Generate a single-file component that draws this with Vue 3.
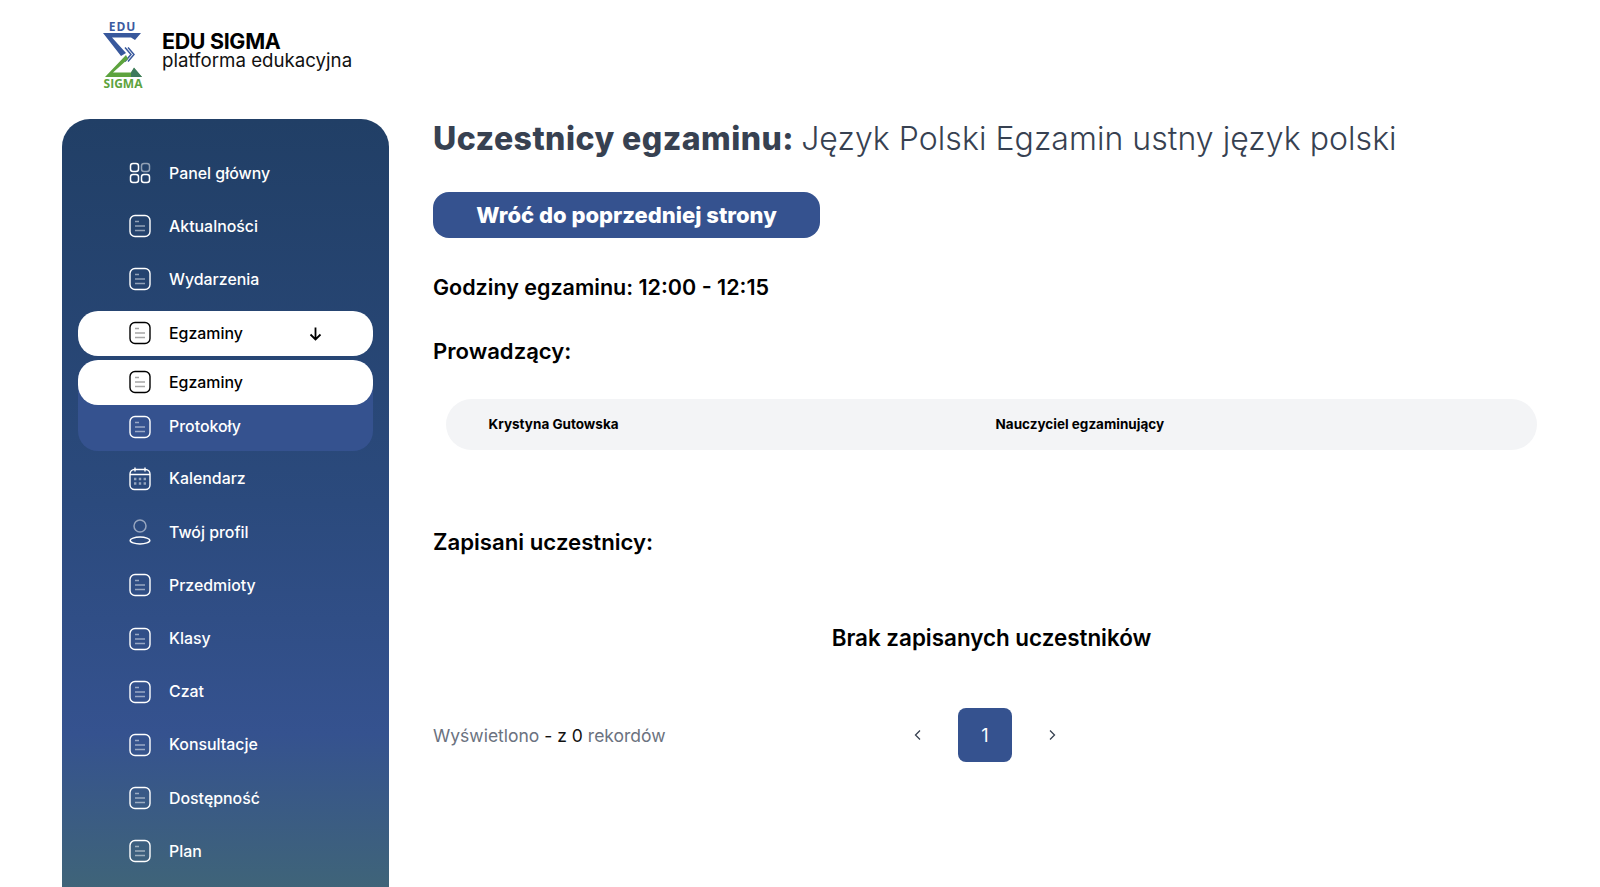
<script setup>
const before = [
  { label: 'Panel główny', icon: 'grid' },
  { label: 'Aktualności', icon: 'doc' },
  { label: 'Wydarzenia', icon: 'doc' }
]
const after = [
  { label: 'Kalendarz', icon: 'cal' },
  { label: 'Twój profil', icon: 'user' },
  { label: 'Przedmioty', icon: 'doc' },
  { label: 'Klasy', icon: 'doc' },
  { label: 'Czat', icon: 'doc' },
  { label: 'Konsultacje', icon: 'doc' },
  { label: 'Dostępność', icon: 'doc' },
  { label: 'Plan', icon: 'doc' }
]
</script>

<template>
  <div class="page">
    <header class="brand">
      <svg class="logo" width="60" height="80" viewBox="0 0 60 80">
        <text x="27.500" y="16" text-anchor="middle" class="lt edu" fill="#3c5a9f">EDU</text>
        <path d="M8 18H46L40 25 36 22.500H17L31 38 26 41Z" fill="#38589c"/>
        <path d="M30 32.500L36 39.500 30 46.500M33 32.500L39 39.500 33 46.500" fill="none" stroke="#38589c" stroke-width="1.500"/>
        <path d="M31 40L33 44 18 57.500H36L39 53 47 62H10Z" fill="#5da33e"/>
        <path d="M39 52.500L47 62H36L36 57.500Z" fill="#3d7a5c"/>
        <text x="28" y="73" text-anchor="middle" class="lt" fill="#5da33e">SIGMA</text>
      </svg>
      <div class="brand-text">
        <div class="brand-name">EDU SIGMA</div>
        <div class="brand-sub">platforma edukacyjna</div>
      </div>
    </header>

    <div class="layout">
      <aside class="sidebar">
        <nav class="nav">
          <a v-for="i in before" :key="i.label" class="row">
            <span class="ic">
              <svg v-if="i.icon === 'grid'" width="22" height="22" viewBox="0 0 22 22" fill="none" stroke="currentColor" stroke-width="1.500">
                <rect x="1.500" y="1.500" width="8" height="8" rx="2.500"/>
                <rect x="12.500" y="1.500" width="8" height="8" rx="2.500" opacity=".5"/>
                <rect x="1.500" y="12.500" width="8" height="8" rx="2.500"/>
                <rect x="12.500" y="12.500" width="8" height="8" rx="2.500"/>
              </svg>
              <svg v-else width="22" height="24" viewBox="0 0 22 24" fill="none" stroke="currentColor">
                <rect x="1" y="1.500" width="20" height="21" rx="5" stroke-width="1.400"/>
                <path d="M6 7.500h4M6 12h10M6 16.500h10" stroke-width="1.300" opacity=".5"/>
              </svg>
            </span>
            <span>{{ i.label }}</span>
          </a>

          <a class="row white first">
            <span class="ic">
              <svg width="22" height="24" viewBox="0 0 22 24" fill="none" stroke="currentColor">
                <rect x="1" y="1.500" width="20" height="21" rx="5" stroke-width="1.400"/>
                <path d="M6 7.500h4M6 12h10M6 16.500h10" stroke-width="1.300" opacity=".35"/>
              </svg>
            </span>
            <span class="grow">Egzaminy</span>
            <svg class="arrow" width="15" height="15" viewBox="0 0 15 15" fill="none" stroke="#000" stroke-width="1.800">
              <path d="M7.500 1.500V13.500M2.500 8.500L7.500 13.500 12.500 8.500"/>
            </svg>
          </a>

          <div class="group">
            <a class="row white sub">
              <span class="ic">
                <svg width="22" height="24" viewBox="0 0 22 24" fill="none" stroke="currentColor">
                  <rect x="1" y="1.500" width="20" height="21" rx="5" stroke-width="1.400"/>
                  <path d="M6 7.500h4M6 12h10M6 16.500h10" stroke-width="1.300" opacity=".35"/>
                </svg>
              </span>
              <span>Egzaminy</span>
            </a>
            <a class="row sub2">
              <span class="ic">
                <svg width="22" height="24" viewBox="0 0 22 24" fill="none" stroke="currentColor">
                  <rect x="1" y="1.500" width="20" height="21" rx="5" stroke-width="1.400"/>
                  <path d="M6 7.500h4M6 12h10M6 16.500h10" stroke-width="1.300" opacity=".5"/>
                </svg>
              </span>
              <span>Protokoły</span>
            </a>
          </div>

          <a v-for="i in after" :key="i.label" class="row">
            <span class="ic">
              <svg v-if="i.icon === 'cal'" width="22" height="24" viewBox="0 0 22 24" fill="none" stroke="currentColor">
                <rect x="1" y="2.500" width="20" height="20" rx="4.500" stroke-width="1.400"/>
                <path d="M1 7.500h20M6 .5v4M16 .5v4" stroke-width="1.400"/>
                <path d="M5 12h2.400M9.800 12h2.400M14.600 12h2.400M5 16.500h2.400M9.800 16.500h2.400M14.600 16.500h2.400" stroke-width="2.400" opacity=".5"/>
              </svg>
              <svg v-else-if="i.icon === 'user'" width="22" height="26" viewBox="0 0 22 26" fill="none" stroke="currentColor" stroke-width="1.500">
                <circle cx="11" cy="7" r="6" opacity=".5"/>
                <ellipse cx="11" cy="21.500" rx="9.800" ry="3.400"/>
              </svg>
              <svg v-else width="22" height="24" viewBox="0 0 22 24" fill="none" stroke="currentColor">
                <rect x="1" y="1.500" width="20" height="21" rx="5" stroke-width="1.400"/>
                <path d="M6 7.500h4M6 12h10M6 16.500h10" stroke-width="1.300" opacity=".5"/>
              </svg>
            </span>
            <span>{{ i.label }}</span>
          </a>
        </nav>
      </aside>

      <main class="main">
        <h1 class="title"><strong>Uczestnicy egzaminu:</strong> Język Polski Egzamin ustny język polski</h1>
        <button class="back">Wróć do poprzedniej strony</button>
        <h2 class="hours">Godziny egzaminu: 12:00 - 12:15</h2>
        <h2 class="lead">Prowadzący:</h2>
        <div class="teacher">
          <span class="t-name">Krystyna Gutowska</span>
          <span class="t-role">Nauczyciel egzaminujący</span>
        </div>
        <h2 class="enrolled">Zapisani uczestnicy:</h2>
        <p class="empty">Brak zapisanych uczestników</p>
        <div class="foot">
          <div class="info">Wyświetlono <b>- z 0</b> rekordów</div>
          <div class="pager">
            <svg width="10" height="12" viewBox="0 0 10 12" fill="none" stroke="#374151" stroke-width="1.300"><path d="M7 1.500L2.500 6 7 10.500"/></svg>
            <span class="current">1</span>
            <svg width="10" height="12" viewBox="0 0 10 12" fill="none" stroke="#374151" stroke-width="1.300"><path d="M3 1.500L7.500 6 3 10.500"/></svg>
          </div>
        </div>
      </main>
    </div>
  </div>
</template>

<style>
html, body { margin: 0; background: #fff; overflow: hidden; }
</style>

<style scoped>
.page { height: 887px; overflow: hidden; font-family: Inter, "Liberation Sans", sans-serif; color: #000; }
.brand { height: 119px; box-sizing: border-box; padding: 15px 0 0 95px; display: flex; align-items: flex-start; gap: 7px; }
.lt { font: 700 12px "Open Sans", sans-serif; }
.edu { letter-spacing: 1px; }
.brand-text { padding-top: 17px; }
.brand-name { font-size: 21.400px; font-weight: 700; line-height: 19px; letter-spacing: -.3px; }
.brand-sub { font-size: 18.700px; line-height: 20px; color: #111; }
.layout { display: flex; align-items: flex-start; padding-left: 62px; }
.sidebar { width: 327px; height: 768px; flex: none; box-sizing: border-box; padding: 32px 16px 0; border-radius: 28px 28px 0 0; background: linear-gradient(180deg, #213f66 0%, #2b4a7d 50%, #35528f 80%, #3f6479 100%); }
.nav { display: flex; flex-direction: column; gap: 9.200px; }
.row { display: flex; align-items: center; height: 44px; padding-left: 51px; box-sizing: border-box; color: #fff; font-size: 15.900px; font-weight: 500; }
.ic { width: 22px; display: flex; justify-content: center; margin-right: 18px; flex: none; }
.white { background: #fff; color: #000; border-radius: 20px; }
.first { height: 45px; }
.grow { flex: 1; }
.arrow { margin-right: 50px; }
.group { margin-top: -5px; margin-bottom: -3px; background: #35528f; border-radius: 20px; height: 91px; }
.sub { height: 45px; }
.sub2 { height: 46px; padding-bottom: 2px; }
.main { flex: 1; padding: 0 63px 0 44px; min-width: 0; }
.title { margin: 0; font-size: 32px; line-height: 40px; font-weight: 300; color: #374151; white-space: nowrap; letter-spacing: .05px; }
.title strong { font-weight: 800; letter-spacing: .47px; margin-right: -2px; }
.back { display: block; margin: 33px 0 0; width: 387px; height: 46px; border: 0; border-radius: 16px; background: #35528f; color: #fff; font: 800 22px Inter, sans-serif; }
.hours, .lead, .enrolled { margin: 0; font-size: 21.500px; line-height: 28px; font-weight: 600; }
.hours { margin-top: 35px; }
.lead { margin-top: 36px; font-size: 22.100px; }
.teacher { margin: 34px 0 0 12.500px; height: 51px; box-sizing: border-box; padding-left: 43px; display: flex; align-items: center; background: #f3f4f6; border-radius: 26px; font-size: 13.500px; font-weight: 700; }
.t-name { width: 507px; padding-bottom: 2px; }
.t-role { padding-bottom: 2px; }
.enrolled { margin-top: 78px; font-size: 22.200px; }
.empty { margin: 68px 0 0; padding-left: 13px; text-align: center; font-size: 22.400px; line-height: 28px; font-weight: 600; }
.foot { display: flex; align-items: center; margin-top: 56px; height: 54px; }
.info { width: 480px; font-size: 17.500px; color: #6b7280; }
.info b { font-weight: 400; color: #111; }
.pager { display: flex; align-items: center; gap: 35px; }
.current { width: 54px; height: 54px; display: flex; align-items: center; justify-content: center; background: #35528f; color: #fff; border-radius: 8px; font-size: 18px; }
</style>
